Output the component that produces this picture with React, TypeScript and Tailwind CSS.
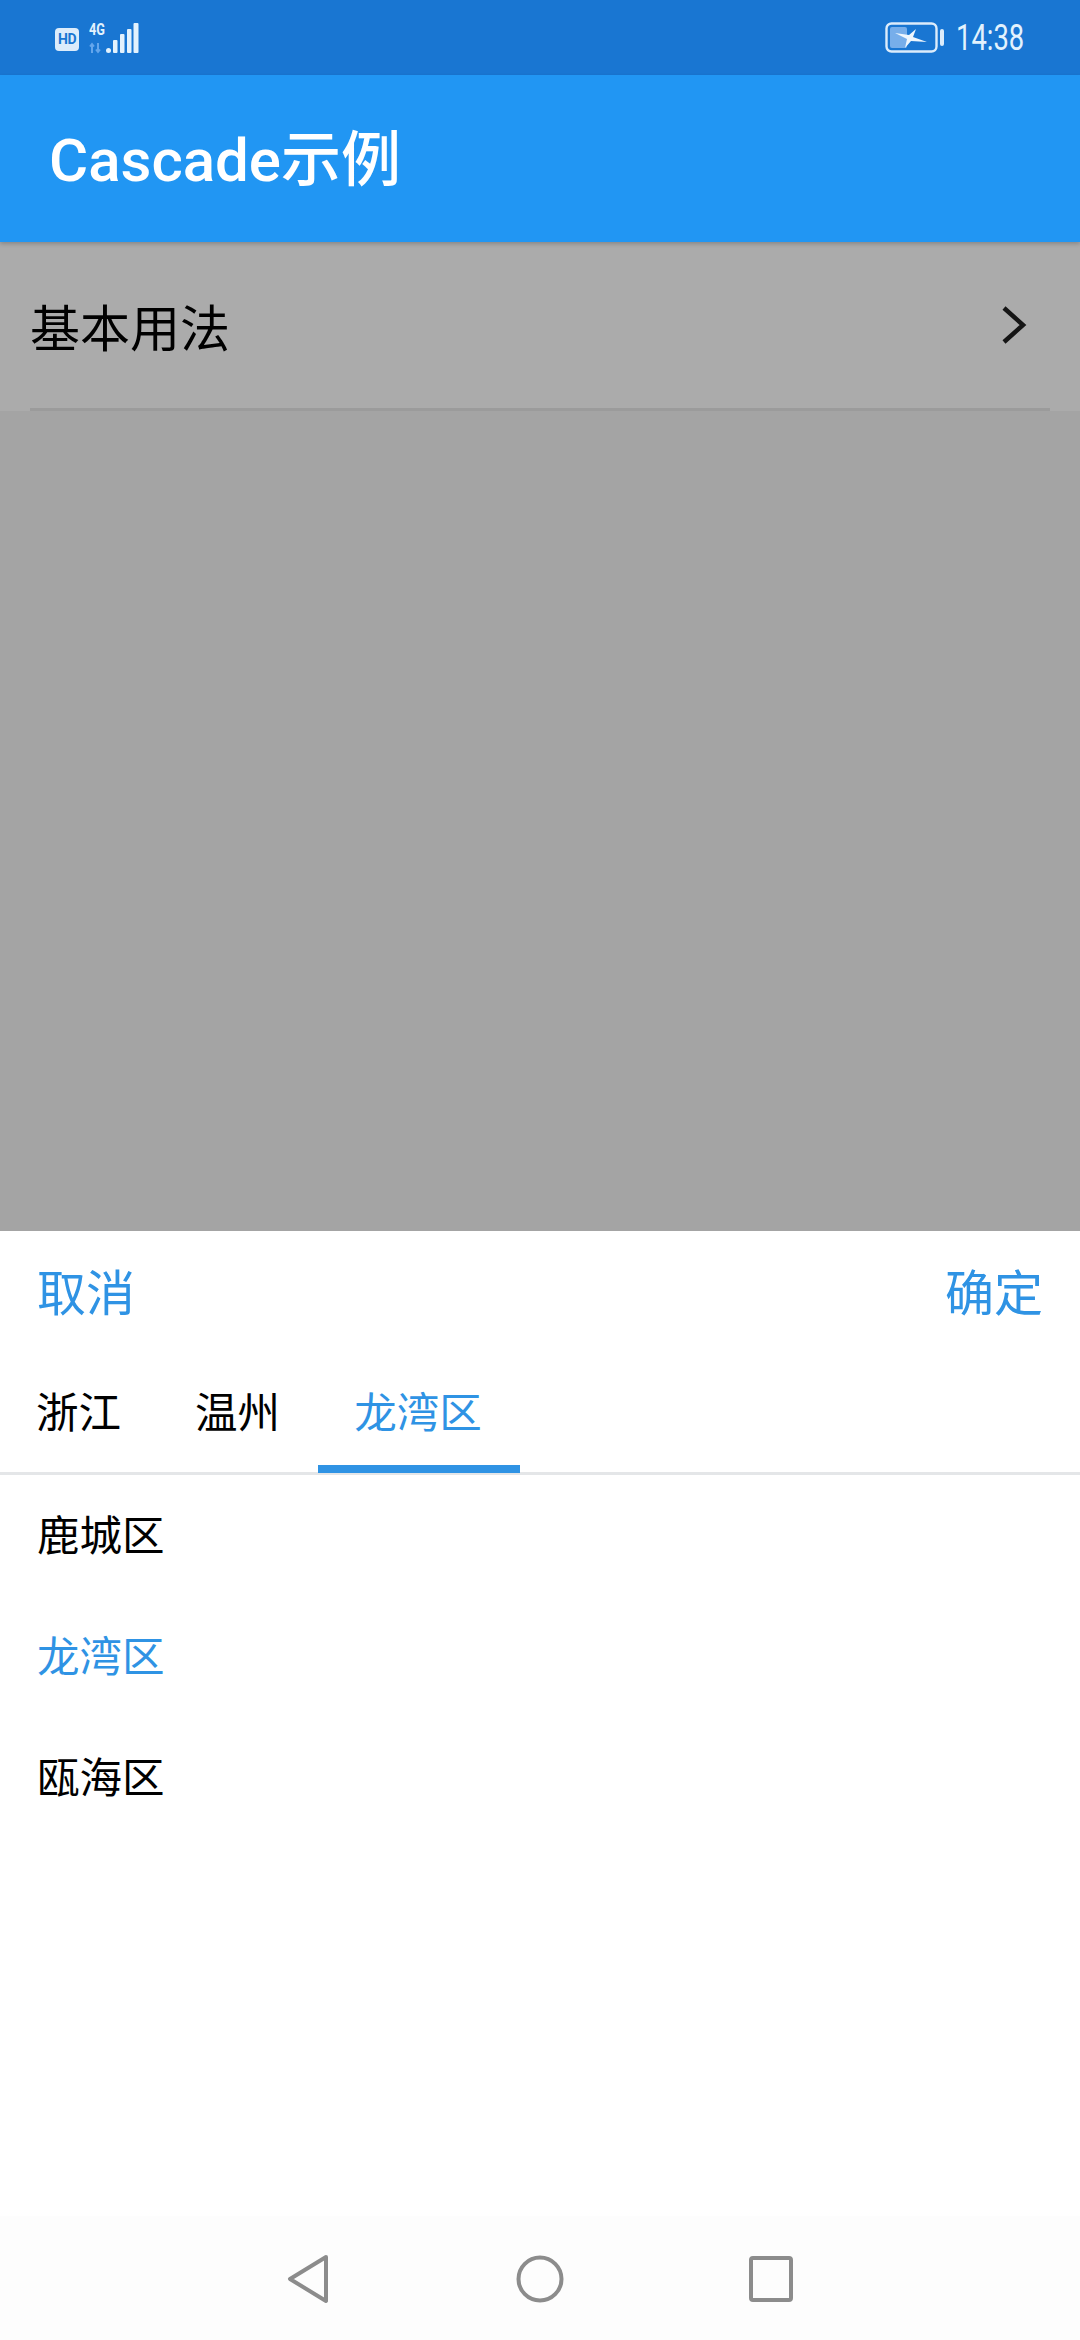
import React from 'react';

const cjk = { fontFamily: '"Noto Sans CJK SC", "Noto Sans", sans-serif' };

function StatusBar() {
  return (
    <div className="h-[75px] bg-[#1976d2] flex items-center justify-between pl-[55px] pr-[56px] text-[#e3f2fd]">
      <div className="flex items-end gap-[10px] -mt-[3px]">
        <div className="w-[24px] h-[23px] mb-[3px] rounded-[4px] bg-[#dcecfb] text-[#1976d2] flex items-center justify-center text-[14px] leading-none font-bold font-['Roboto',sans-serif] tracking-[-0.5px]">
          HD
        </div>
        <svg width="50" height="35" viewBox="0 -3 50 35">
          <text x="0" y="13" fontSize="16" fontWeight="700" fontFamily="Roboto, sans-serif" fill="#e3f2fd" textLength="16" lengthAdjust="spacingAndGlyphs">4G</text>
          <path d="M3 22v9M1 24.5l2-2.5 2 2.5M9 21v9M7 27.5l2 2.5 2-2.5" stroke="#64a6ec" strokeWidth="2" fill="none" />
          <rect x="17" y="26" width="5" height="5" rx="2.5" fill="#e3f2fd" />
          <rect x="24" y="18" width="4.5" height="13" rx="1" fill="#e3f2fd" />
          <rect x="31" y="12" width="4.5" height="19" rx="1" fill="#e3f2fd" />
          <rect x="38" y="7" width="4.5" height="24" rx="1" fill="#e3f2fd" />
          <rect x="44.5" y="1" width="5" height="30" rx="1" fill="#e3f2fd" />
        </svg>
      </div>
      <div className="flex items-center gap-[11px]">
        <svg width="60" height="32" viewBox="0 0 60 32">
          <rect x="1.5" y="1.5" width="50" height="28" rx="5" fill="none" stroke="#dcecfb" strokeWidth="2.4" />
          <rect x="5" y="5" width="17" height="21" rx="2" fill="#77aeea" />
          <path d="M10 11l14 2 7-6-3 8 14 5-16-1-6 7 2-9z" fill="#eef6fd" />
          <rect x="55" y="7" width="4" height="17" rx="2" fill="#dcecfb" />
        </svg>
        <span className="text-[36px] leading-none font-['Roboto',sans-serif] font-normal w-[68px] origin-left scale-x-[0.76] whitespace-nowrap">14:38</span>
      </div>
    </div>
  );
}

function NavBar() {
  return (
    <div className="h-[124px] bg-[#fdfdfd] flex items-center justify-center gap-[184px] pt-[2px]">
      <svg width="46" height="52" viewBox="0 0 46 52">
        <path d="M40 4L4 26l36 22z" fill="none" stroke="#8c8c8c" strokeWidth="4" strokeLinejoin="round" />
      </svg>
      <svg width="48" height="52" viewBox="0 0 48 52">
        <circle cx="24" cy="26" r="21.5" fill="none" stroke="#8c8c8c" strokeWidth="4" />
      </svg>
      <svg width="46" height="48" viewBox="0 0 46 48">
        <rect x="3" y="3" width="40" height="42" rx="2" fill="none" stroke="#8c8c8c" strokeWidth="4" />
      </svg>
    </div>
  );
}

export default function App() {
  const list = [
    { name: '鹿城区', active: false },
    { name: '龙湾区', active: true },
    { name: '瓯海区', active: false },
  ];

  return (
    <div className="w-[1080px] h-[2340px] flex flex-col overflow-hidden bg-white" style={cjk}>
      <StatusBar />
      <div className="h-[167px] bg-[#2196f3] flex items-center pl-[49px] pt-[5px] relative z-10 shadow-[0_2px_4px_rgba(0,0,0,0.2)]">
        <h1 className="text-white text-[60px] font-medium leading-none" style={{ fontFamily: 'Roboto, "Noto Sans CJK SC", sans-serif' }}>
          Cascade示例
        </h1>
      </div>

      <div className="h-[989px] bg-[#a4a4a4] flex flex-col">
        <div className="h-[169px] bg-[#ababab] px-[30px] flex flex-col">
          <div className="flex-1 flex items-center justify-between">
            <span className="text-[50px] text-black leading-none">基本用法</span>
            <svg width="26" height="40" viewBox="0 0 26 40" className="mr-[23px]">
              <path d="M3 3l19 17L3 37" fill="none" stroke="#151515" strokeWidth="4.5" />
            </svg>
          </div>
          <div className="h-[3px] bg-[#9b9b9b]" />
        </div>
      </div>

      <div className="flex-1 bg-white flex flex-col">
        <div className="h-[122px] flex items-center justify-between px-[37px] pb-[6px]">
          <span className="text-[49px] leading-none text-[#2f93e4]">取消</span>
          <span className="text-[49px] leading-none text-[#2f93e4]">确定</span>
        </div>
        <div className="h-[122px] flex border-b-[3px] border-[#e4e6e8] pl-[36px] pt-[36px]">
          <span className="text-[42.5px] leading-none text-black">浙江</span>
          <span className="text-[42.5px] leading-none text-black ml-[74px]">温州</span>
          <div className="ml-[38px] w-[202px] h-[84px] -mb-px border-b-[8px] border-[#2f93e4] flex justify-center pr-[2px]">
            <span className="text-[42.5px] leading-none text-[#2f93e4]">龙湾区</span>
          </div>
        </div>
        <div className="flex flex-col">
          {list.map((item) => (
            <div key={item.name} className="h-[121px] flex items-center pl-[37px] pb-[4px]">
              <span className={`text-[42.5px] leading-none ${item.active ? 'text-[#2f93e4]' : 'text-black'}`}>{item.name}</span>
            </div>
          ))}
        </div>
        <div className="flex-1" />
        <NavBar />
      </div>
    </div>
  );
}
